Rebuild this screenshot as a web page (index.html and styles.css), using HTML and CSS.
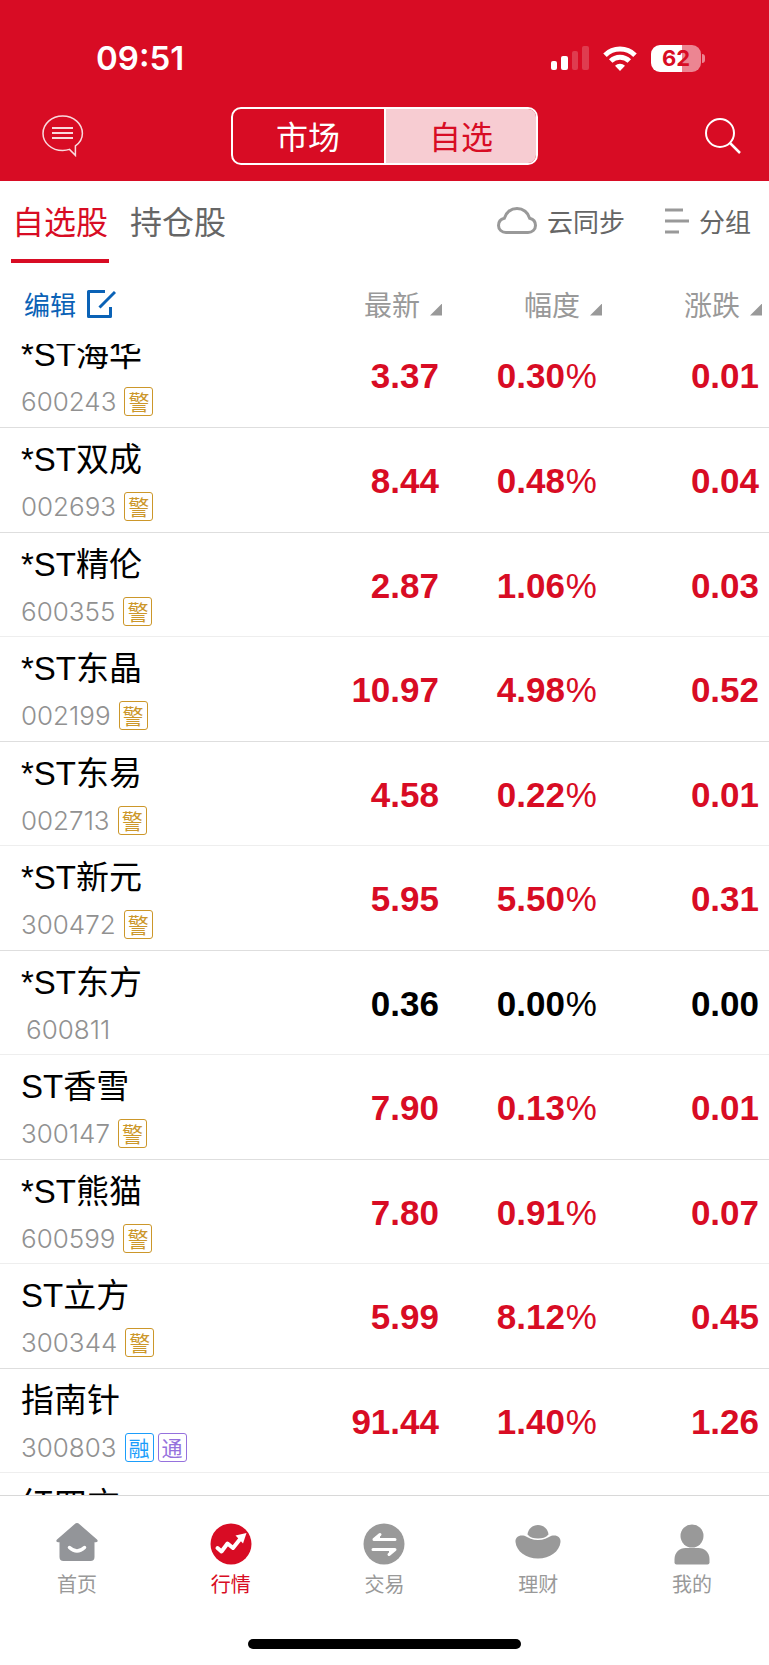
FILE: index.html
```html
<!DOCTYPE html>
<html lang="zh-CN">
<head>
<meta charset="utf-8">
<meta name="viewport" content="width=device-width, initial-scale=1">
<title>自选股</title>
<link rel="stylesheet" href="styles.css">
</head>
<body>
<div class="app">
  <header class="top">
    <div class="status">
      <time class="clock">09:51</time>
      <div class="indicators">
        <svg class="signal" width="38" height="24" viewBox="0 0 38 24" fill="#fff" aria-hidden="true">
          <rect x="0" y="15" width="6" height="9" rx="2"/>
          <rect x="10" y="10" width="7" height="14" rx="2"/>
          <rect x="21" y="5" width="6" height="19" rx="2" opacity=".2"/>
          <rect x="31" y="0" width="7" height="24" rx="2" opacity=".2"/>
        </svg>
        <svg class="wifi" width="34" height="25" viewBox="0 0 34 25" aria-hidden="true">
          <g fill="none" stroke="#fff" stroke-width="5">
            <path d="M2 9.200a21.500 21.500 0 0 1 30 0"/>
            <path d="M7.700 15a13.300 13.300 0 0 1 18.600 0"/>
          </g>
          <path d="M17 25l-5-5.200a7.200 7.200 0 0 1 10 0z" fill="#fff"/>
        </svg>
        <div class="battery"><span class="level">62</span><i class="cap"></i></div>
      </div>
    </div>
    <nav class="navbar">
      <button class="icon-btn" aria-label="消息">
        <svg width="42" height="42" viewBox="0 0 42 42" fill="none" stroke="#fff" stroke-opacity=".85" aria-hidden="true">
          <path stroke-width="1.500" d="M27.500 34.400c-2.300.8-4.300 1.100-6.800 1.100C9.600 35.500 1 27.800 1 18.400S9.600 1 20.700 1s19.700 7.800 19.700 17.400c0 5-2.800 9.500-7 12.400V40.400z"/>
          <path stroke-width="2" d="M10 13h21M10 18h21M10 23h21"/>
        </svg>
      </button>
      <div class="segment">
        <button class="seg">市场</button>
        <button class="seg on">自选</button>
      </div>
      <button class="icon-btn" aria-label="搜索">
        <svg width="36" height="36" viewBox="0 0 36 36" fill="none" stroke="#fff" stroke-width="2" aria-hidden="true">
          <circle cx="15" cy="15" r="14"/>
          <path stroke-width="2.500" d="M25 25l10 10"/>
        </svg>
      </button>
    </nav>
  </header>

  <div class="tabs">
    <button class="tab on">自选股</button>
    <button class="tab">持仓股</button>
    <div class="tools">
      <button class="tool">
        <svg width="40" height="28" viewBox="0 0 40 28" fill="none" stroke="#999" stroke-width="3" aria-hidden="true">
          <path d="M9 25.500C4.800 25.500 1.500 22.500 1.500 18.500c0-3.600 2.400-6.300 5.800-7.200C8.800 5.500 13.800 1.500 20 1.500s11.200 4 12.700 9.800c3.400.9 5.800 3.600 5.800 7.200 0 4-3.300 7-7.500 7z"/>
        </svg>云同步
      </button>
      <button class="tool">
        <svg width="24" height="26" viewBox="0 0 24 26" stroke="#999" stroke-width="3" aria-hidden="true">
          <path d="M0 2h18M0 13h24M0 24h14"/>
        </svg>分组
      </button>
    </div>
  </div>

  <table class="quotes">
    <thead>
      <tr>
        <th class="edit-cell"><button class="edit">编辑
          <svg width="30" height="30" viewBox="0 0 30 30" fill="none" stroke="#0a62b6" stroke-width="3" stroke-linejoin="round" aria-hidden="true">
            <path d="M19 2.500H2.500v25h22V18"/><path d="M13.500 18.500L29 3"/>
          </svg></button></th>
        <th><button class="sort">最新<i class="tri"></i></button></th>
        <th><button class="sort">幅度<i class="tri"></i></button></th>
        <th><button class="sort">涨跌<i class="tri"></i></button></th>
      </tr>
    </thead>
    <tbody>
      <tr><td><div class="name">*ST海华</div><div class="code">600243<span class="tag">警</span></div></td><td>3.37</td><td>0.30<span class="pct">%</span></td><td>0.01</td></tr>
      <tr><td><div class="name">*ST双成</div><div class="code">002693<span class="tag">警</span></div></td><td>8.44</td><td>0.48<span class="pct">%</span></td><td>0.04</td></tr>
      <tr><td><div class="name">*ST精伦</div><div class="code">600355<span class="tag">警</span></div></td><td>2.87</td><td>1.06<span class="pct">%</span></td><td>0.03</td></tr>
      <tr><td><div class="name">*ST东晶</div><div class="code">002199<span class="tag">警</span></div></td><td>10.97</td><td>4.98<span class="pct">%</span></td><td>0.52</td></tr>
      <tr><td><div class="name">*ST东易</div><div class="code">002713<span class="tag">警</span></div></td><td>4.58</td><td>0.22<span class="pct">%</span></td><td>0.01</td></tr>
      <tr><td><div class="name">*ST新元</div><div class="code">300472<span class="tag">警</span></div></td><td>5.95</td><td>5.50<span class="pct">%</span></td><td>0.31</td></tr>
      <tr class="flat"><td><div class="name">*ST东方</div><div class="code bare">600811</div></td><td>0.36</td><td>0.00<span class="pct">%</span></td><td>0.00</td></tr>
      <tr><td><div class="name">ST香雪</div><div class="code">300147<span class="tag">警</span></div></td><td>7.90</td><td>0.13<span class="pct">%</span></td><td>0.01</td></tr>
      <tr><td><div class="name">*ST熊猫</div><div class="code">600599<span class="tag">警</span></div></td><td>7.80</td><td>0.91<span class="pct">%</span></td><td>0.07</td></tr>
      <tr><td><div class="name">ST立方</div><div class="code">300344<span class="tag">警</span></div></td><td>5.99</td><td>8.12<span class="pct">%</span></td><td>0.45</td></tr>
      <tr><td><div class="name">指南针</div><div class="code">300803<span class="tag margin">融</span><span class="tag connect">通</span></div></td><td>91.44</td><td>1.40<span class="pct">%</span></td><td>1.26</td></tr>
      <tr><td><div class="name">红四方</div></td><td></td><td></td><td></td></tr>
    </tbody>
  </table>

  <nav class="bottom">
    <a class="item" href="#">
      <svg width="46" height="42" viewBox="0 0 46 42" aria-hidden="true">
        <path fill="#939599" d="M20.500 1.200q2.500-2.200 5 0L43 16.500q1.800 2.300-1 2.700h-1.500V34q0 4-4 4h-27q-4 0-4-4V19.200H4q-2.800-.4-1-2.700z"/>
        <path fill="none" stroke="#fff" stroke-width="3.500" stroke-linecap="round" d="M15.500 24.500q7.500 7 15 0"/>
      </svg>首页</a>
    <a class="item on" href="#">
      <svg width="42" height="42" viewBox="0 0 42 42" aria-hidden="true">
        <circle cx="21" cy="21" r="20.500" fill="#d80c24"/>
        <path fill="none" stroke="#fff" stroke-width="4" stroke-linecap="round" stroke-linejoin="round" d="M7.500 25l4 3.500 6-8 5.500 4.500 8-10"/>
        <path fill="#fff" d="M25.500 12.500L36.500 10 33 20.500z"/>
      </svg>行情</a>
    <a class="item" href="#">
      <svg width="42" height="42" viewBox="0 0 42 42" aria-hidden="true">
        <circle cx="21" cy="21" r="20.500" fill="#999"/>
        <path fill="none" stroke="#fff" stroke-width="3" stroke-linecap="round" stroke-linejoin="round" d="M32 16.500H11l6-5M10 26.500h22l-6 5"/>
        <path fill="#fff" d="M11 16.500l6-5v5zM32 26.500l-6 5v-5z"/>
      </svg>交易</a>
    <a class="item" href="#">
      <svg width="46" height="42" viewBox="0 0 46 42" fill="#999" aria-hidden="true">
        <path d="M12.500 11.500C13 6 17.500 2 23 2s10 4 10.500 9.500c-2.500 3-6.500 4-10.500 4s-8-1-10.500-4z"/>
        <path d="M.5 19c-.3-5 3.500-7.500 9-6.300 4 2 8 4.300 13.500 4.300s9.500-2.300 13.500-4.300c5.500-1.200 9.300 1.300 9 6.300C44.500 28.500 35 35.500 23 35.500S1.500 28.500.5 19z"/>
      </svg>理财</a>
    <a class="item" href="#">
      <svg width="42" height="42" viewBox="0 0 42 42" fill="#999" aria-hidden="true">
        <circle cx="21" cy="13" r="11.500"/>
        <path d="M14.500 25h13c6 0 11 4.500 11 11v3.500q0 2-2 2h-31q-2 0-2-2V36c0-6.500 5-11 11-11z"/>
      </svg>我的</a>
  </nav>
  <div class="home-bar"><i></i></div>
</div>
</body>
</html>
```
FILE: styles.css
```css
* { box-sizing: border-box; }

body {
  margin: 0;
  background: #fff;
  font-family: "Liberation Sans", "Noto Sans CJK SC", sans-serif;
}

button {
  margin: 0;
  padding: 0;
  border: 0;
  background: none;
  font: inherit;
  color: inherit;
  cursor: pointer;
}

svg { display: block; flex: none; }

.app {
  display: flex;
  flex-direction: column;
  height: 100vh;
  overflow: hidden;
}

.top { background: #d80c24; color: #fff; }

.status {
  display: flex;
  justify-content: space-between;
  align-items: center;
  height: 100px;
  padding: 16px 64px 0 96px;
}

.clock { font: 600 33px/40px Inter, sans-serif; }

.indicators { display: flex; align-items: center; gap: 14px; }

.battery { display: flex; align-items: center; gap: 1px; }

.level {
  width: 50px;
  height: 27px;
  border-radius: 9px;
  background: linear-gradient(90deg, #fff 62%, #ec8592 62%);
  color: #d80c24;
  font: 700 22px/27px Inter, sans-serif;
  text-align: center;
}

.cap {
  width: 3px;
  height: 9px;
  border-radius: 0 4px 4px 0;
  background: #ec8592;
}

.navbar {
  display: grid;
  grid-template-columns: 1fr 40% 1fr;
  align-items: center;
  height: 81px;
  padding: 0 0 10px;
}

.icon-btn { display: flex; padding: 0 28px 0 42px; }

.icon-btn:last-child { justify-self: end; }

.segment {
  display: flex;
  height: 58px;
  border: 2px solid #fff;
  border-radius: 10px;
  overflow: hidden;
}

.seg { flex: 1; padding-bottom: 2px; font-size: 32px; }

.seg.on {
  border-left: 2px solid #fff;
  background: #f7ccd2;
  color: #d80c24;
}

.tabs {
  display: flex;
  height: 82px;
  padding: 0 18px 0 11px;
  gap: 20px;
  color: #666;
}

.tab {
  padding: 0 1px;
  border-bottom: 4px solid transparent;
  font-size: 32px;
}

.tab.on { border-color: #d80c24; color: #d80c24; }

.tools { display: flex; gap: 40px; margin-left: auto; padding-bottom: 3px; }

.tool { display: flex; align-items: center; gap: 10px; font-size: 26px; }

.quotes {
  display: flex;
  flex: 1;
  flex-direction: column;
  min-height: 0;
}

.quotes tr {
  display: grid;
  grid-template-columns: 1fr 21% 21% 21%;
  align-items: center;
  padding-right: 7px;
}

.quotes thead, .quotes tbody { display: block; }

.quotes thead tr { height: 81px; }

.quotes tbody { flex: 1; min-height: 0; overflow: hidden; }

.quotes tbody tr {
  height: 105px;
  align-items: start;
  border-bottom: 1px solid #dedede;
}

.quotes tbody tr:nth-child(odd) { height: 104px; border-color: #eee; }

/* The list rests part-way through its first row. */
.quotes tbody tr:first-child {
  height: 84px;
  align-content: end;
  overflow: hidden;
  border-color: #dedede;
}

th { padding: 0; font-weight: 400; text-align: right; color: #999; }

.edit-cell { padding-left: 24px; text-align: left; }

.edit { display: flex; align-items: center; gap: 10px; font-size: 26px; color: #0a62b6; }

.sort { font-size: 28px; }

.tri {
  display: inline-block;
  width: 12px;
  height: 12px;
  margin-left: 10px;
  background: #999;
  clip-path: polygon(100% 0, 100% 100%, 0 100%);
}

td {
  padding: 2px 3px 0 0;
  font-size: 35px;
  font-weight: 700;
  line-height: 102px;
  text-align: right;
  color: #d80c24;
}

td:nth-child(3) { padding-right: 5px; }

.pct { margin-left: 1px; font-weight: 400; }

.flat td { color: #000; }

.quotes td:first-child {
  padding: 13px 0 11px 21px;
  font-weight: 400;
  text-align: left;
  color: #000;
}

.name { font-size: 33px; line-height: 38px; }

.code {
  display: flex;
  align-items: center;
  gap: 4px;
  height: 29px;
  margin-top: 13px;
  font: 300 26px/29px Inter, sans-serif;
  color: #919191;
}

.bare { padding-left: 5px; }

.tag {
  width: 29px;
  height: 29px;
  border: 1px solid #cc972a;
  border-radius: 3px;
  font: 21px/26px "Noto Sans CJK SC", sans-serif;
  text-align: center;
  color: #cc972a;
}

.tag:first-child { margin-left: 4px; }

.margin { border-color: #1b9dfb; color: #1b9dfb; }

.connect { border-color: #9571dd; color: #9571dd; }

.bottom {
  display: flex;
  height: 120px;
  padding-top: 27px;
  border-top: 1px solid #d8d8d8;
}

.item {
  display: flex;
  flex: 1;
  flex-direction: column;
  align-items: center;
  gap: 6px;
  font-size: 20px;
  line-height: 28px;
  color: #999;
  text-decoration: none;
}

.item.on { color: #d80c24; }

.home-bar { display: flex; justify-content: center; height: 50px; padding-top: 24px; }

.home-bar i { width: 273px; height: 10px; border-radius: 5px; background: #000; }
```
